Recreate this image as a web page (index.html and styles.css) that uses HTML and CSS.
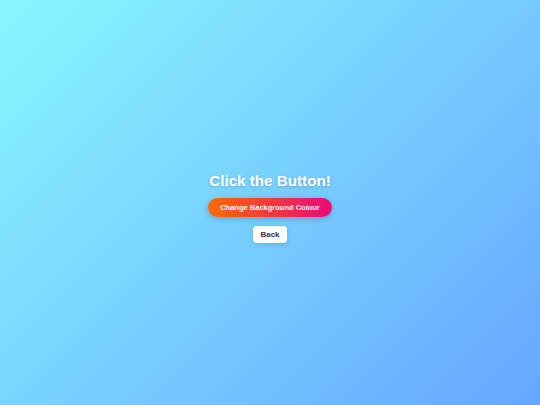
FILE: index.html
```html
<!DOCTYPE html>
<html>
<head>
<meta charset="utf-8">
<link rel="stylesheet" href="styles.css">
</head>
<body>
<main class="page">
  <h1 class="title">Click the Button!</h1>
  <button class="change-btn">Change Background Colour</button>
  <button class="back-btn">Back</button>
</main>
</body>
</html>
```
FILE: styles.css
```css
html, body {
  margin: 0;
  padding: 0;
  height: 100%;
}
body {
  background: linear-gradient(135deg, #89f7fe 0%, #66a6ff 100%);
  font-family: "Liberation Sans", Arial, sans-serif;
}
.page {
  height: 100%;
  display: flex;
  flex-direction: column;
  align-items: center;
  justify-content: center;
  padding-top: 9.5px;
  box-sizing: border-box;
}
.title {
  margin: 0 0 9px;
  color: #fff;
  font-size: 15.2px;
  line-height: 17.5px;
  font-weight: bold;
  text-shadow: 0 1px 3px rgba(0,0,0,0.18);
}
.change-btn {
  border: none;
  border-radius: 10px;
  background: linear-gradient(90deg, #ff6a00, #ee0979);
  color: #fff;
  font-family: inherit;
  font-weight: bold;
  font-size: 7.5px;
  height: 19px;
  width: 124px;
  padding: 0;
  box-shadow: 0 2px 6px rgba(0,0,0,0.2);
}
.back-btn {
  margin-top: 9px;
  border: none;
  border-radius: 4px;
  background: #fff;
  color: #333;
  font-family: inherit;
  font-weight: bold;
  font-size: 8px;
  height: 17px;
  width: 34px;
  padding: 0;
  box-shadow: 0 2px 5px rgba(0,0,0,0.12);
}
```
